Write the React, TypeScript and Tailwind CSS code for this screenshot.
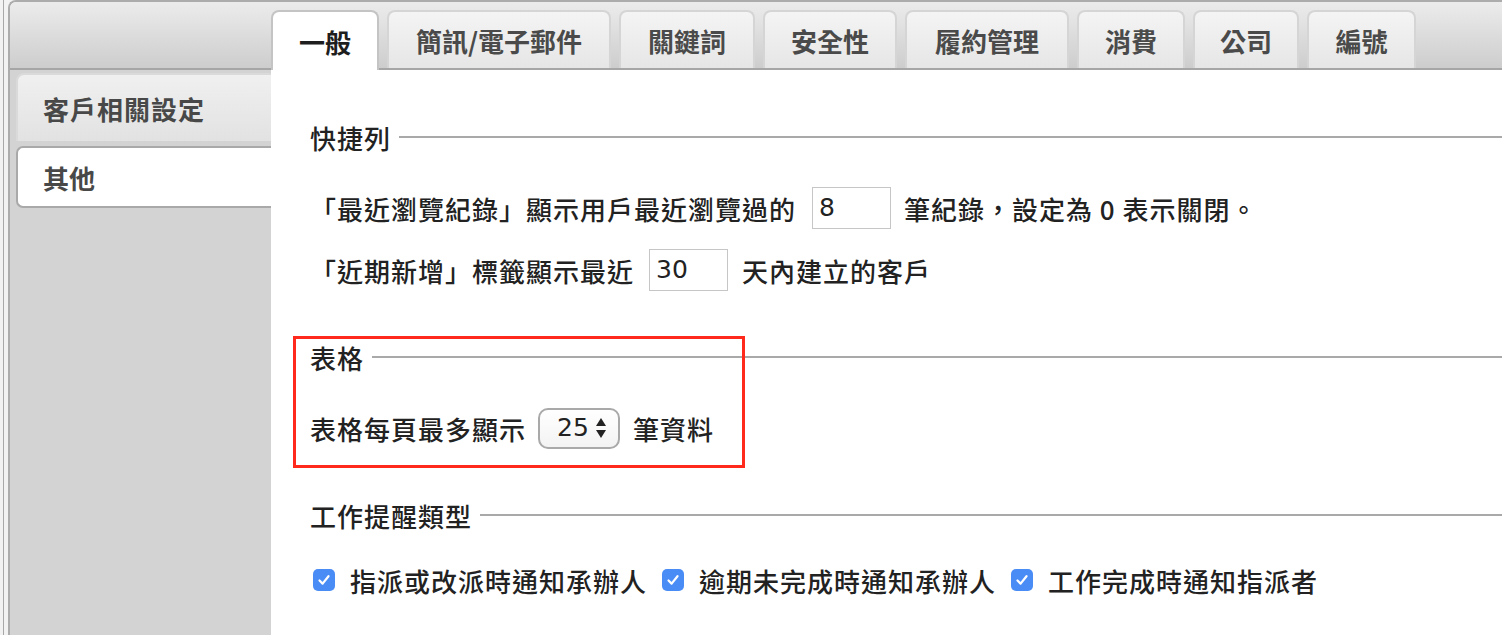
import React from "react";

const tabs = [
  { label: "一般", w: "w-[108px]" },
  { label: "簡訊/電子郵件", w: "w-[224px]" },
  { label: "關鍵詞", w: "w-[136px]" },
  { label: "安全性", w: "w-[134px]" },
  { label: "履約管理", w: "w-[164px]" },
  { label: "消費", w: "w-[108px]" },
  { label: "公司", w: "w-[106px]" },
  { label: "編號", w: "w-[109px]" },
];

function Legend({ title }: { title: string }) {
  return (
    <div className="flex items-center h-[40px]">
      <span className="pr-[8px]">{title}</span>
      <div className="flex-1 h-[2px] bg-[#a9a9a9]" />
    </div>
  );
}

function Check({ label }: { label: string }) {
  return (
    <label className="flex items-center">
      <span className="w-[22px] h-[22px] rounded-[5px] bg-[#4a8cf6] flex items-center justify-center mr-[15px]">
        <svg width="14" height="14" viewBox="0 0 14 14">
          <path d="M2.5 7.5 L5.6 10.6 L11.5 3.2" fill="none" stroke="white" strokeWidth="2.2" strokeLinecap="round" strokeLinejoin="round" />
        </svg>
      </span>
      <span className="mr-[15px]">{label}</span>
    </label>
  );
}

export default function App() {
  return (
    <div className="flex h-[635px] bg-[#f2f2f2] font-['Noto_Sans_CJK_TC','Noto_Sans',sans-serif] overflow-hidden">
      {/* page edge */}
      <div className="w-[3px]" />
      <div className="w-[1px] bg-[#a8a8a8]" />
      <div className="w-[4px]" />

      <div className="flex-1 flex flex-col border-t-2 border-l-2 border-[#acacac] rounded-tl-[8px] overflow-hidden">
        {/* tab bar */}
        <div className="h-[68px] flex items-end pl-[261px] gap-[8px] bg-gradient-to-b from-[#ececec] to-[#cdcdcd] border-b-2 border-[#a6a6a6]">
          {tabs.map((t, i) =>
            i === 0 ? (
              <div
                key={t.label}
                className={`${t.w} relative h-[60px] -mb-[2px] flex items-center justify-center bg-white border-2 border-b-0 border-[#c4c4c4] rounded-t-[8px] text-[26px] font-bold text-[#1e1e1e]`}
              >
                {t.label}
              </div>
            ) : (
              <div
                key={t.label}
                className={`${t.w} h-[58px] flex items-center justify-center bg-gradient-to-b from-[#f4f4f4] to-[#e6e6e6] border-2 border-b-0 border-[#d5d5d5] rounded-t-[8px] text-[26px] font-bold text-[#4a4a4a]`}
              >
                {t.label}
              </div>
            )
          )}
        </div>

        <div className="flex-1 flex">
          {/* sidebar */}
          <div className="w-[261px] bg-[#d3d3d3] pl-[6px] pt-[3px] flex flex-col gap-[5px]">
            <div className="h-[68px] flex items-center pl-[25px] rounded-tl-[8px] border-t-2 border-l-2 border-[#dadada] bg-gradient-to-b from-[#f0f0f0] to-[#e2e2e2] text-[26px] font-bold text-[#484848] tracking-[1px]">
              客戶相關設定
            </div>
            <div className="h-[62px] flex items-center pl-[25px] rounded-l-[7px] border-2 border-r-0 border-[#a9a9a9] bg-white text-[26px] font-bold text-[#484848]">
              其他
            </div>
          </div>

          {/* content */}
          <div className="flex-1 bg-white pl-[39px] pt-[47px] text-[26px] font-medium tracking-[1px] text-[#222]">
            <Legend title="快捷列" />
            <div className="flex items-center h-[42px] mt-[30px]">
              <span>「最近瀏覽紀錄」顯示用戶最近瀏覽過的</span>
              <div className="ml-[16px] mr-[13px] w-[79px] h-[42px] border border-[#c6c6c6] pl-[6px] flex items-center font-['DejaVu_Sans',sans-serif] font-normal tracking-normal text-[25px]">
                8
              </div>
              <span>筆紀錄，設定為 0 表示關閉。</span>
            </div>
            <div className="flex items-center h-[42px] mt-[20px]">
              <span>「近期新增」標籤顯示最近</span>
              <div className="ml-[15px] mr-[14px] w-[79px] h-[42px] border border-[#c6c6c6] pl-[6px] flex items-center font-['DejaVu_Sans',sans-serif] font-normal tracking-normal text-[25px]">
                30
              </div>
              <span>天內建立的客戶</span>
            </div>

            <div className="relative mt-[46px]">
              <div className="absolute -left-[17px] -top-[1px] w-[452px] h-[132px] border-[3px] border-[#ff2a1c]" />
              <Legend title="表格" />
              <div className="flex items-center h-[42px] mt-[30px]">
                <span>表格每頁最多顯示</span>
                <div className="ml-[12px] mr-[13px] w-[82px] h-[41px] rounded-[10px] border-2 border-[#a9a9a9] bg-gradient-to-b from-white to-[#f3f3f3] flex items-center pl-[17px] gap-[6px]">
                  <span className="font-['DejaVu_Sans',sans-serif] font-normal tracking-normal text-[25px]">25</span>
                  <svg width="12" height="22" viewBox="0 0 12 22">
                    <path d="M6 1 L11 9 L1 9 Z" fill="#222" />
                    <path d="M1 13 L11 13 L6 21 Z" fill="#222" />
                  </svg>
                </div>
                <span>筆資料</span>
              </div>
            </div>

            <div className="mt-[46px]">
              <Legend title="工作提醒類型" />
              <div className="flex items-center h-[42px] mt-[24px] pl-[3px]">
                <Check label="指派或改派時通知承辦人" />
                <Check label="逾期未完成時通知承辦人" />
                <Check label="工作完成時通知指派者" />
              </div>
            </div>
          </div>
        </div>
      </div>
    </div>
  );
}
